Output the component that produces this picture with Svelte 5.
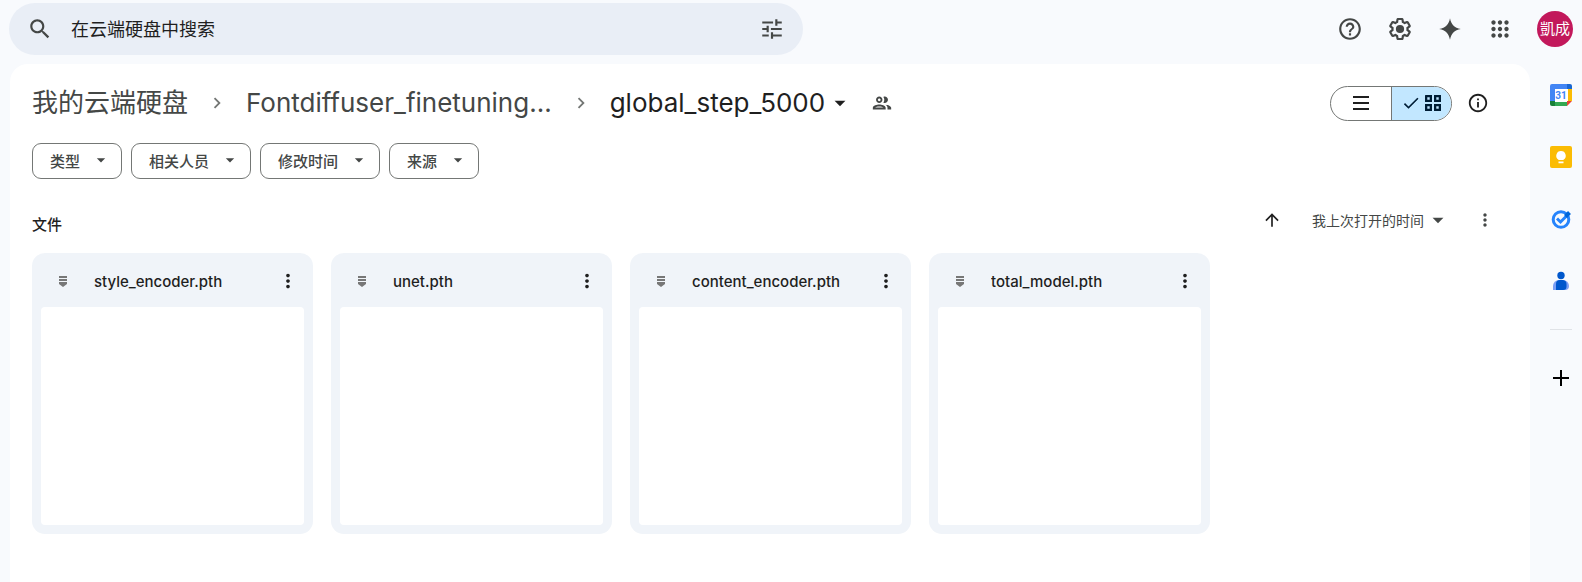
<script>
  const filters = ['类型', '相关人员', '修改时间', '来源'];
  const files = ['style_encoder.pth', 'unet.pth', 'content_encoder.pth', 'total_model.pth'];
</script>

{#snippet caret(size)}
  <svg class="icon" width={size} height={size} viewBox="0 0 24 24" aria-hidden="true"><path d="M7 10l5 5 5-5z" /></svg>
{/snippet}

{#snippet chevron()}
  <svg class="icon chevron" width="22" height="22" viewBox="0 0 24 24" aria-hidden="true"><path d="M10 6L8.59 7.41 13.17 12l-4.58 4.59L10 18l6-6z" /></svg>
{/snippet}

{#snippet dots(size)}
  <svg class="icon" width={size} height={size} viewBox="0 0 24 24" aria-hidden="true"><path d="M12 8c1.1 0 2-.9 2-2s-.9-2-2-2-2 .9-2 2 .9 2 2 2zm0 2c-1.1 0-2 .9-2 2s.9 2 2 2 2-.9 2-2-.9-2-2-2zm0 6c-1.1 0-2 .9-2 2s.9 2 2 2 2-.9 2-2-.9-2-2-2z" /></svg>
{/snippet}

<div class="app">
  <header>
    <form class="search" role="search" onsubmit={(e) => e.preventDefault()}>
      <button type="button" aria-label="搜索">
        <svg class="icon" width="26" height="26" viewBox="0 0 24 24"><path d="M15.5 14h-.79l-.28-.27C15.41 12.59 16 11.11 16 9.5 16 5.91 13.09 3 9.5 3S3 5.91 3 9.5 5.91 16 9.5 16c1.61 0 3.09-.59 4.23-1.57l.27.28v.79l5 4.99L20.49 19l-4.99-5zm-6 0C7.01 14 5 11.99 5 9.5S7.01 5 9.5 5 14 7.01 14 9.5 11.99 14 9.5 14z" /></svg>
      </button>
      <input type="text" aria-label="在云端硬盘中搜索" placeholder="在云端硬盘中搜索" />
      <button type="button" aria-label="高级搜索">
        <svg class="icon" width="26" height="26" viewBox="0 0 24 24"><path d="M3 17v2h6v-2H3zM3 5v2h10V5H3zm10 16v-2h8v-2h-8v-2h-2v6h2zM7 9v2H3v2h4v2h2V9H7zm14 4v-2H11v2h10zm-6-4h2V7h4V5h-4V3h-2v6z" /></svg>
      </button>
    </form>
    <nav class="tools" aria-label="工具">
      <button aria-label="支持">
        <svg class="icon" width="26" height="26" viewBox="0 0 24 24"><path d="M11 18h2v-2h-2v2zm1-16C6.48 2 2 6.48 2 12s4.48 10 10 10 10-4.48 10-10S17.52 2 12 2zm0 18c-4.41 0-8-3.59-8-8s3.59-8 8-8 8 3.59 8 8-3.59 8-8 8zm0-14c-2.21 0-4 1.79-4 4h2c0-1.1.9-2 2-2s2 .9 2 2c0 2-3 1.75-3 5h2c0-2.25 3-2.5 3-5 0-2.21-1.79-4-4-4z" /></svg>
      </button>
      <button aria-label="设置">
        <svg class="icon" width="26" height="26" viewBox="0 0 24 24"><path d="M13.85 22.25h-3.7c-.74 0-1.36-.54-1.45-1.27l-.27-1.89c-.27-.14-.53-.29-.79-.46l-1.8.72c-.7.26-1.47-.03-1.81-.65L2.2 15.53c-.35-.66-.2-1.44.36-1.88l1.53-1.19c-.01-.15-.02-.3-.02-.46 0-.15.01-.31.02-.46l-1.52-1.19c-.59-.45-.74-1.26-.37-1.88l1.85-3.19c.34-.62 1.11-.9 1.79-.63l1.81.73c.26-.17.52-.32.78-.46l.27-1.91c.09-.7.71-1.25 1.44-1.25h3.7c.74 0 1.36.54 1.45 1.27l.27 1.89c.27.14.53.29.79.46l1.8-.72c.71-.26 1.48.03 1.82.65l1.84 3.18c.36.66.2 1.44-.36 1.88l-1.52 1.19c.01.15.02.3.02.46s-.01.31-.02.46l1.52 1.19c.56.45.72 1.23.37 1.86l-1.86 3.22c-.34.62-1.11.9-1.8.63l-1.8-.72c-.26.17-.52.32-.78.46l-.27 1.91c-.1.68-.72 1.22-1.46 1.22zm-3.23-2h2.76l.37-2.55.53-.22c.44-.18.88-.44 1.34-.78l.45-.34 2.38.96 1.38-2.4-2.03-1.58.07-.56c.03-.26.06-.51.06-.78s-.03-.53-.06-.78l-.07-.56 2.03-1.58-1.39-2.4-2.39.96-.45-.35c-.42-.32-.87-.58-1.33-.77l-.52-.22-.37-2.55h-2.76l-.37 2.55-.53.21c-.44.19-.88.44-1.34.79l-.45.33-2.38-.95-1.39 2.39 2.03 1.58-.07.56a7 7 0 0 0-.06.79c0 .26.02.53.06.78l.07.56-2.03 1.58 1.38 2.4 2.39-.96.45.35c.43.33.86.58 1.33.77l.53.22.38 2.55z" /><circle cx="12" cy="12" r="3.8" /></svg>
      </button>
      <button aria-label="Gemini">
        <svg class="icon" width="26" height="26" viewBox="0 0 24 24"><path d="M12 2c1 5.600 4 9 10 10-6 1-9 4.400-10 10-1-5.600-4-9-10-10 6-1 9-4.400 10-10z" /></svg>
      </button>
      <button aria-label="Google 应用">
        <svg class="icon" width="26" height="26" viewBox="0 0 24 24"><path d="M6 8c1.100 0 2-.9 2-2s-.9-2-2-2-2 .9-2 2 .9 2 2 2zm6 12c1.100 0 2-.9 2-2s-.9-2-2-2-2 .9-2 2 .9 2 2 2zm-6 0c1.100 0 2-.9 2-2s-.9-2-2-2-2 .9-2 2 .9 2 2 2zm0-6c1.100 0 2-.9 2-2s-.9-2-2-2-2 .9-2 2 .9 2 2 2zm6 0c1.100 0 2-.9 2-2s-.9-2-2-2-2 .9-2 2 .9 2 2 2zm4-8c0 1.100.9 2 2 2s2-.9 2-2-.9-2-2-2-2 .9-2 2zm-4 2c1.100 0 2-.9 2-2s-.9-2-2-2-2 .9-2 2 .9 2 2 2zm6 6c1.100 0 2-.9 2-2s-.9-2-2-2-2 .9-2 2 .9 2 2 2zm0 6c1.100 0 2-.9 2-2s-.9-2-2-2-2 .9-2 2 .9 2 2 2z" /></svg>
      </button>
      <button class="avatar">凱成</button>
    </nav>
  </header>

  <div class="body">
    <main>
      <div class="title-row">
        <nav class="crumbs" aria-label="路径">
          <button class="crumb">我的云端硬盘</button>
          {@render chevron()}
          <button class="crumb">Fontdiffuser_finetuning...</button>
          {@render chevron()}
          <button class="crumb current">global_step_5000 {@render caret(26)}</button>
          <button class="share" aria-label="共享">
            <svg class="icon" width="22" height="22" viewBox="0 0 24 24"><path d="M9 12c1.930 0 3.500-1.570 3.500-3.500S10.930 5 9 5 5.500 6.570 5.500 8.500 7.070 12 9 12zm0-5c.83 0 1.500.67 1.500 1.500S9.830 10 9 10s-1.500-.67-1.500-1.500S8.170 7 9 7zm0 6.750c-2.340 0-7 1.170-7 3.500V19h14v-1.750c0-2.330-4.660-3.500-7-3.500zM4.340 17c.84-.58 2.870-1.250 4.660-1.250s3.820.67 4.660 1.250H4.340zm11.700-3.190c1.160.84 1.960 1.960 1.960 3.440V19h4v-1.750c0-2.020-3.500-3.170-5.960-3.440zM15 12c1.930 0 3.500-1.570 3.500-3.500S16.930 5 15 5c-.54 0-1.040.13-1.500.35.63.89 1 1.980 1 3.150s-.37 2.260-1 3.150c.46.22.96.35 1.500.35z" /></svg>
          </button>
        </nav>
        <div class="view">
          <div class="toggle" role="group" aria-label="布局">
            <button aria-label="列表布局" aria-pressed="false">
              <svg class="icon" width="20" height="20" viewBox="0 0 20 20"><path d="M2 3h16v2H2zM2 9h16v2H2zM2 15h16v2H2z" /></svg>
            </button>
            <button class="on" aria-label="网格布局" aria-pressed="true">
              <svg class="icon" width="20" height="20" viewBox="0 0 24 24"><path d="M9 16.170L4.830 12l-1.420 1.410L9 19 21 7l-1.410-1.410z" /></svg>
              <svg class="icon" width="20" height="20" viewBox="0 0 20 20"><path fill-rule="evenodd" d="M2.500 2H9v7H2V2.500zM4.300 4.300v2.400h2.400V4.300zM11 2h7v7h-7zM13.300 4.300v2.400h2.400V4.300zM2 11h7v7H2zM4.300 13.300v2.400h2.400v-2.400zM11 11h7v7h-7zM13.300 13.300v2.400h2.400v-2.400z" /></svg>
            </button>
          </div>
          <button class="info" aria-label="查看详细信息">
            <svg class="icon" width="22" height="22" viewBox="0 0 24 24"><path d="M11 7h2v2h-2zm0 4h2v6h-2zm1-9C6.480 2 2 6.480 2 12s4.480 10 10 10 10-4.480 10-10S17.520 2 12 2zm0 18c-4.410 0-8-3.590-8-8s3.590-8 8-8 8 3.590 8 8-3.590 8-8 8z" /></svg>
          </button>
        </div>
      </div>

      <div class="filters">
        {#each filters as name}
          <button>{name}{@render caret(20)}</button>
        {/each}
      </div>

      <div class="section">
        <h2>文件</h2>
        <div class="sort">
          <button aria-label="反转排序方向">
            <svg class="icon dark" width="20" height="20" viewBox="0 0 24 24"><path d="M4 12l1.410 1.410L11 7.830V20h2V7.830l5.580 5.590L20 12l-8-8-8 8z" /></svg>
          </button>
          <button class="by">我上次打开的时间{@render caret(26)}</button>
          <button aria-label="更多排序选项">{@render dots(20)}</button>
        </div>
      </div>

      <div class="grid">
        {#each files as name}
          <article>
            <div class="head">
              <svg width="20" height="20" viewBox="0 0 20 20" fill="#777" aria-hidden="true"><path d="M6 5h8v2H6zM6 8h8v2H6zM6 11h8v2l-4 3-4-3z" /></svg>
              <h3>{name}</h3>
              <button aria-label="更多操作">{@render dots(22)}</button>
            </div>
            <div class="thumb"></div>
          </article>
        {/each}
      </div>
    </main>

    <aside aria-label="侧边栏">
      <button aria-label="日历">
        <svg width="22" height="22" viewBox="0 0 22 22">
          <path fill="#fff" d="M4 4h14v14H4z" />
          <path fill="#4285f4" d="M2 0h15v5H5v12H0V2a2 2 0 0 1 2-2z" />
          <path fill="#1967d2" d="M17 0h3a2 2 0 0 1 2 2v3h-5z" />
          <path fill="#fbbc04" d="M18 5h4v12h-4z" />
          <path fill="#34a853" d="M5 18h12v4H5z" />
          <path fill="#188038" d="M0 17h5v5H2a2 2 0 0 1-2-2z" />
          <path fill="#ea4335" d="M17 17h5l-5 5z" />
          <text x="11" y="15" text-anchor="middle">31</text>
        </svg>
      </button>
      <button aria-label="Keep">
        <svg width="22" height="22" viewBox="0 0 22 22">
          <rect width="22" height="22" rx="2" fill="#fbbc04" />
          <path fill="#fff" d="M11 5a4.700 4.700 0 0 0-2.500 8.700V14h5v-.3A4.700 4.700 0 0 0 11 5zM8.500 15.500h5v1.800h-5z" />
        </svg>
      </button>
      <button aria-label="Tasks">
        <svg width="22" height="22" viewBox="0 0 22 22" fill="none">
          <circle cx="11" cy="11.500" r="7.800" stroke="#2684fc" stroke-width="3" />
          <path stroke="#2684fc" stroke-width="3" d="M7 10.500l3.500 3.500 6-6" />
          <path stroke="#0066da" stroke-width="4" d="M15.500 8.500l4-4" />
        </svg>
      </button>
      <button aria-label="通讯录">
        <svg width="22" height="22" viewBox="0 0 22 22">
          <circle cx="11" cy="5.500" r="3.700" fill="#0057cc" />
          <path fill="#7b9ff5" d="M3 20v-4a6 6 0 0 1 6-6h4a6 6 0 0 1 6 6 4 4 0 0 1-4 4z" />
          <path fill="#0057cc" d="M6 20v-6a4 4 0 0 1 4-4h3a4 4 0 0 1 3.500 4v2.500a3.500 3.500 0 0 1-3.500 3.500z" />
        </svg>
      </button>
      <hr />
      <button aria-label="获取插件">
        <svg width="22" height="22" viewBox="0 0 22 22"><path d="M10 3h2v7h7v2h-7v7h-2v-7H3v-2h7z" /></svg>
      </button>
    </aside>
  </div>
</div>

<style>
  :global(body) {
    background: #f8fafd;
  }
  .app {
    min-height: 100vh;
    display: flex;
    flex-direction: column;
    background: #f8fafd;
    color: #1f1f1f;
    font-family: Inter, 'Noto Sans CJK SC', sans-serif;
    font-size: 15px;
  }
  button {
    display: flex;
    align-items: center;
    justify-content: center;
    border: 0;
    padding: 0;
    background: none;
    color: #444746;
    font: inherit;
    cursor: pointer;
  }
  svg {
    display: block;
    flex: none;
  }
  .icon {
    fill: currentColor;
  }
  .chevron {
    color: #747775;
  }
  header {
    display: flex;
    align-items: center;
    justify-content: space-between;
    padding: 3px 9px 9px;
  }
  .search {
    display: flex;
    align-items: center;
    gap: 18px;
    flex: 0 1 794px;
    box-sizing: border-box;
    height: 52px;
    padding: 0 18px;
    border-radius: 26px;
    background: #e9eef6;
  }
  .search input {
    flex: 1;
    min-width: 0;
    border: 0;
    padding: 0;
    outline: 0;
    background: none;
    color: #1f1f1f;
    font: inherit;
    font-size: 18px;
  }
  .search input::placeholder {
    color: #1f1f1f;
    opacity: 1;
  }
  .tools {
    display: flex;
    align-items: center;
    gap: 24px;
  }
  .avatar {
    width: 36px;
    height: 36px;
    border-radius: 50%;
    background: #c2185b;
    color: #fff;
    font-family: 'Noto Sans CJK TC', sans-serif;
    font-size: 15px;
    line-height: 20px;
    padding-bottom: 2px;
    white-space: nowrap;
  }
  .body {
    flex: 1;
    display: flex;
    padding-left: 10px;
  }
  main {
    flex: 1;
    min-width: 0;
    padding: 20px 21px 48px 22px;
    border-radius: 18px 18px 0 0;
    background: #fff;
  }
  .title-row,
  .crumbs,
  .view,
  .section,
  .sort {
    display: flex;
    align-items: center;
  }
  .title-row,
  .section {
    justify-content: space-between;
  }
  .title-row {
    height: 38px;
  }
  .crumbs {
    gap: 18px;
  }
  .crumb {
    font-size: 26px;
    line-height: 38px;
    white-space: nowrap;
  }
  .current {
    gap: 2px;
    color: #1f1f1f;
  }
  .view {
    gap: 15px;
    padding-right: 20px;
  }
  .toggle {
    display: flex;
    box-sizing: border-box;
    height: 35px;
    border: 1px solid #747775;
    border-radius: 18px;
    overflow: hidden;
  }
  .toggle button {
    width: 60px;
    color: #1f1f1f;
  }
  .toggle .on {
    gap: 2px;
    box-sizing: border-box;
    border-left: 1px solid #747775;
    background: #c2e7ff;
    color: #001d35;
  }
  .info {
    color: #1f1f1f;
  }
  .filters {
    display: flex;
    gap: 9px;
    margin-top: 21px;
  }
  .filters button {
    box-sizing: border-box;
    height: 36px;
    gap: 11px;
    padding: 0 10px 2px 17px;
    border: 1px solid #747775;
    border-radius: 9px;
    font-weight: 500;
  }
  .section {
    height: 44px;
    margin: 19px 0 11px;
  }
  h2,
  h3 {
    margin: 0;
    font-size: 15px;
    font-weight: 500;
  }
  h2 {
    padding-top: 6px;
  }
  .sort {
    padding-right: 14px;
  }
  .by {
    gap: 1px;
    margin: 0 24px 0 30px;
    font-size: 14px;
  }
  .dark {
    color: #1f1f1f;
  }
  .grid {
    display: grid;
    grid-template-columns: repeat(auto-fill, minmax(260px, 1fr));
    gap: 18px;
  }
  article {
    display: flex;
    flex-direction: column;
    box-sizing: border-box;
    aspect-ratio: 1;
    padding: 0 9px 9px;
    border-radius: 13px;
    background: #f0f4f9;
  }
  .head {
    display: flex;
    align-items: center;
    box-sizing: border-box;
    height: 54px;
    padding: 2px 5px 0 12px;
  }
  .head h3 {
    flex: 1;
    min-width: 0;
    margin-left: 21px;
    overflow: hidden;
    text-overflow: ellipsis;
    white-space: nowrap;
  }
  .head button {
    color: #1f1f1f;
  }
  .thumb {
    flex: 1;
    border-radius: 4px;
    background: #fff;
  }
  aside {
    display: flex;
    flex-direction: column;
    align-items: center;
    gap: 40px;
    width: 52px;
    box-sizing: border-box;
    padding: 20px 0 0 10px;
  }
  aside text {
    fill: #4285f4;
    font-family: Roboto, sans-serif;
    font-size: 10px;
    font-weight: 700;
  }
  hr {
    width: 22px;
    margin: -3px 0;
    border: 0;
    border-top: 1px solid #e0e3e7;
  }
</style>
